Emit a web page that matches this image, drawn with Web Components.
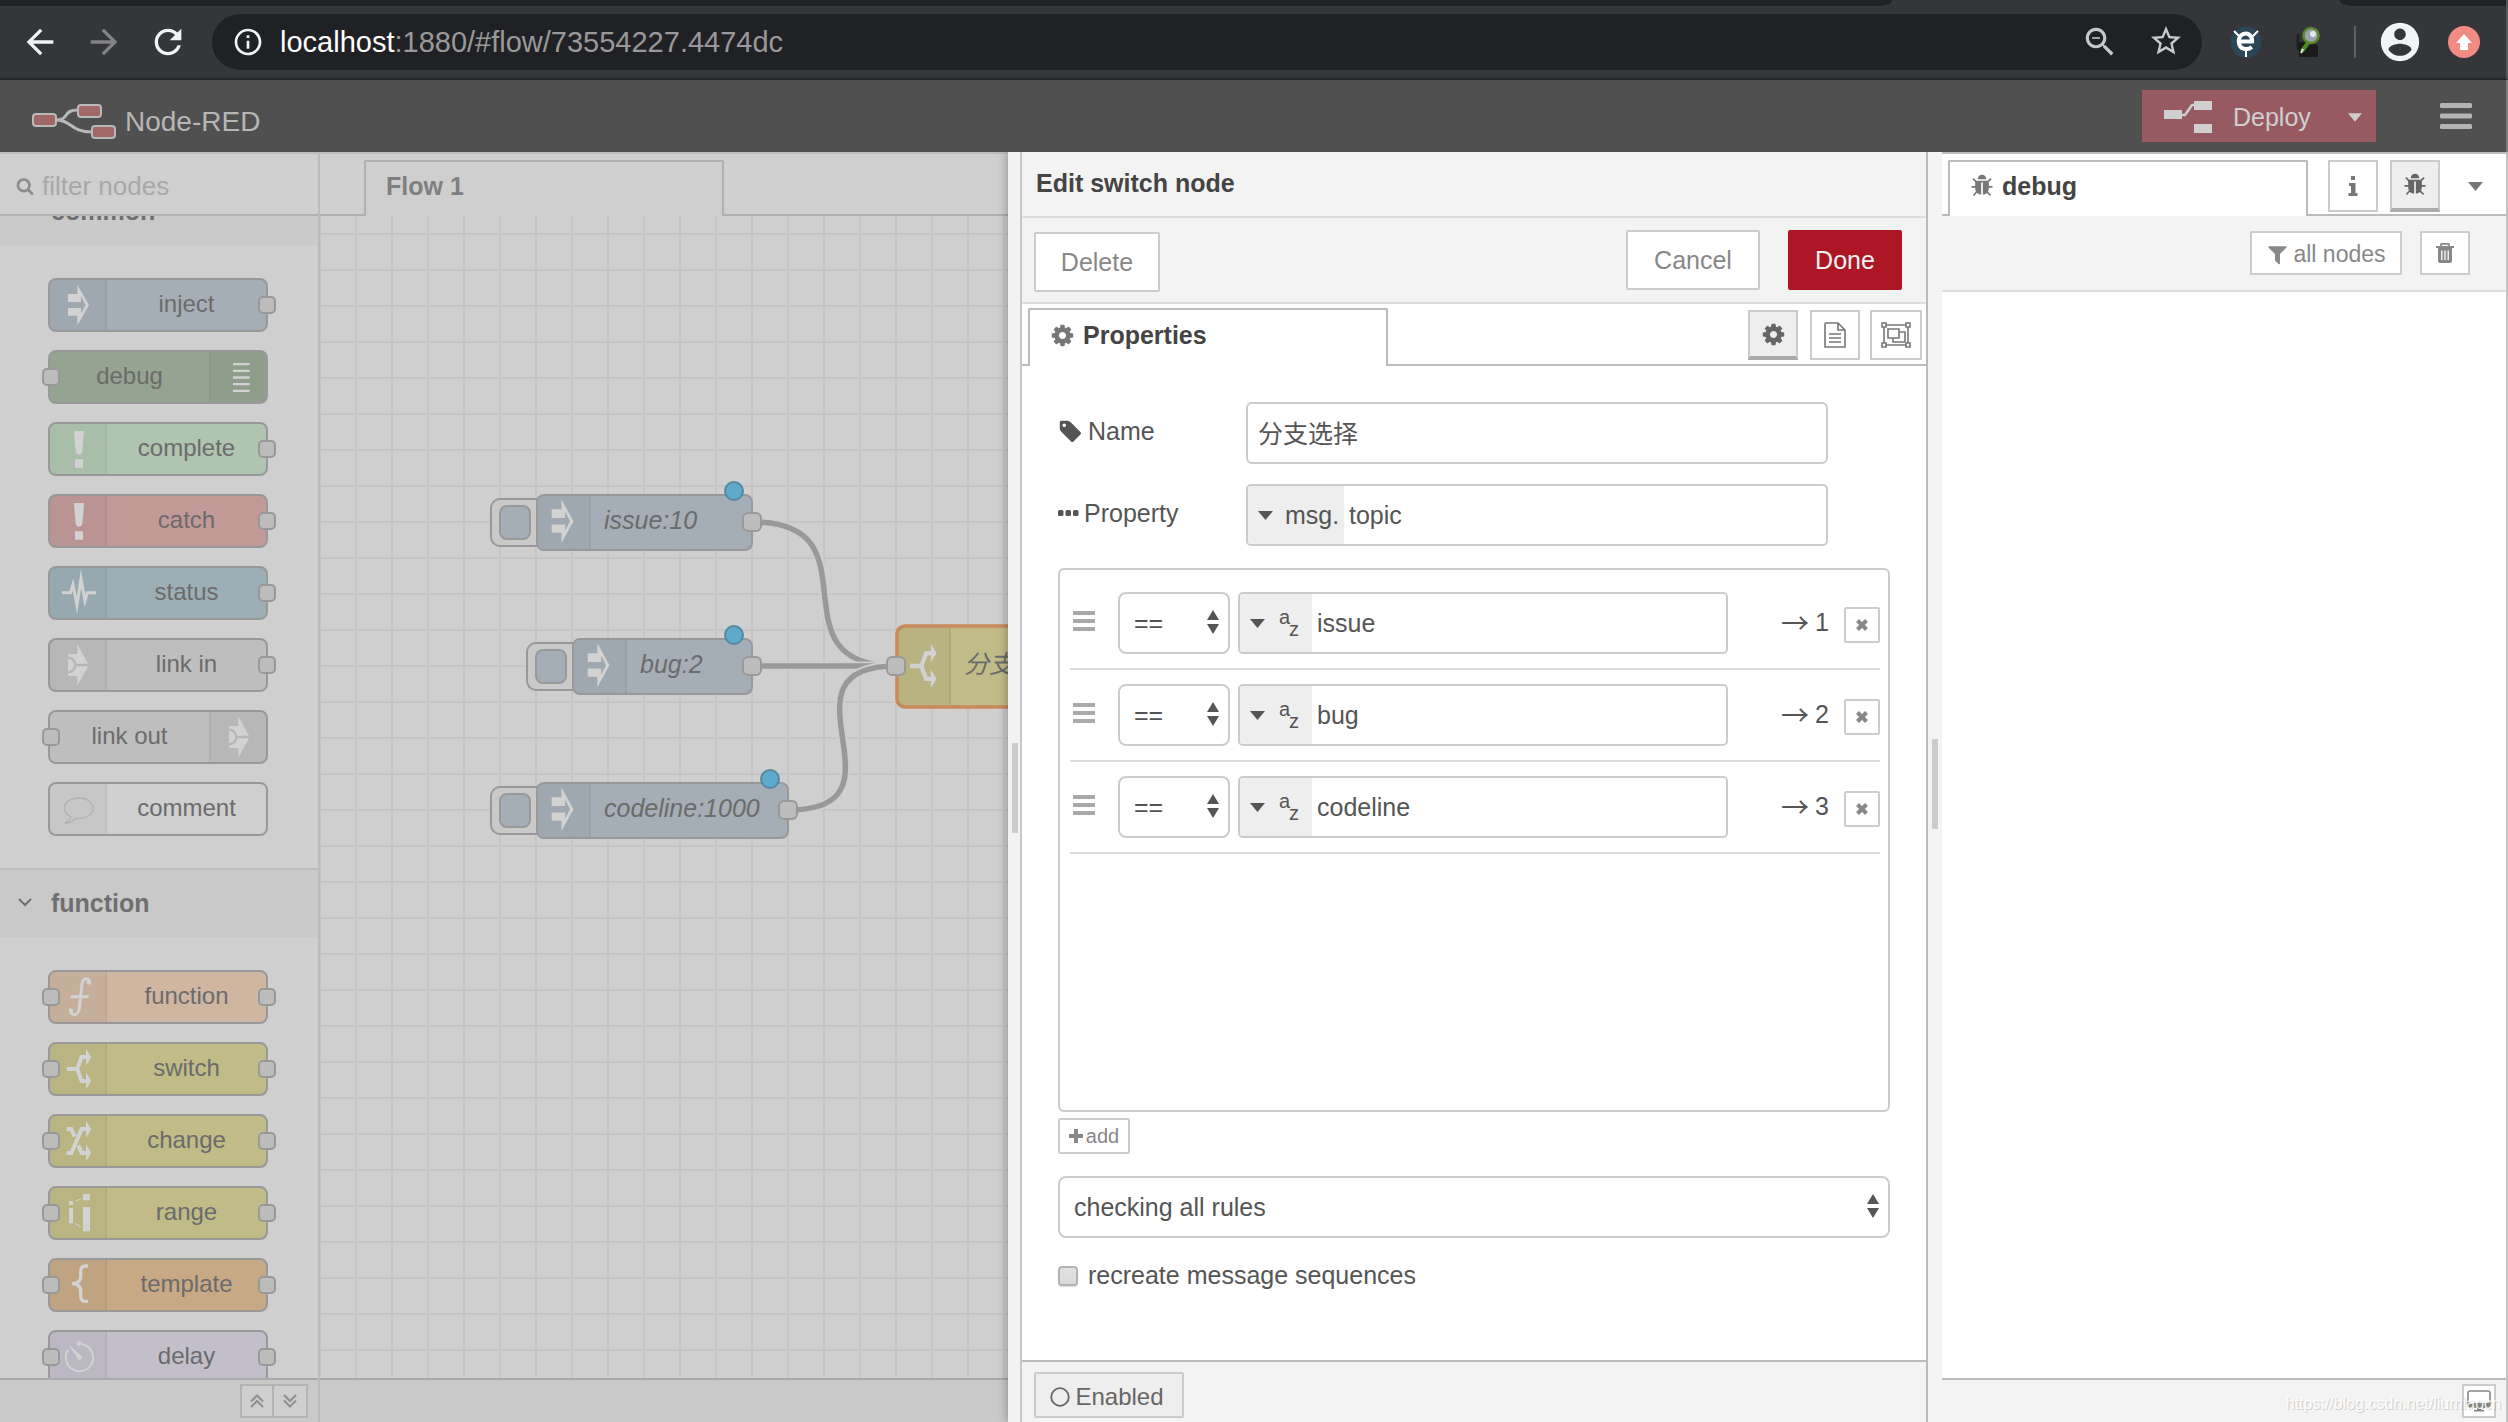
<!DOCTYPE html>
<html lang="en">
<head>
<meta charset="utf-8">
<title>Node-RED</title>
<style>
body{margin:0;font-family:"Liberation Sans","Noto Sans CJK SC",sans-serif;font-size:25px;line-height:30px;color:#555;background:#fff;overflow:hidden}
</style>
</head>
<body>
<red-app></red-app>
<script>
const BASE = `<style>
*{box-sizing:border-box}
svg{display:block;flex:none}
button,input,select{font:inherit;color:inherit;margin:0}
button{display:flex;align-items:center;justify-content:center;padding:0;background:#fff;border:2px solid #ccc;color:#888;border-radius:2px}
input:not([type=checkbox]){border:0;background:none;outline:0;min-width:0}
a{color:inherit;text-decoration:none}
</style>`;
function define(name, render) {
  customElements.define(name, class extends HTMLElement {
    connectedCallback() {
      if (this.shadowRoot) return;
      const t = document.createElement('template');
      t.innerHTML = BASE + (typeof render === 'function' ? render(this) : render);
      this.attachShadow({mode: 'open'}).append(t.content.cloneNode(true));
    }
  });
}
const attr = (el, n, d = '') => el.getAttribute(n) ?? d;
const svg = (w, h, vb, body) => `<svg width="${w}" height="${h}" viewBox="${vb}" fill="currentColor" aria-hidden="true">${body}</svg>`;

/* icons on the 1792 grid */
const FA = {
  cog: 'M1152 896q0-106-75-181t-181-75-181 75-75 181 75 181 181 75 181-75 75-181zm512-109v222q0 12-8 23t-20 13l-185 28q-19 54-39 91 35 50 107 138 10 12 10 25t-9 23q-27 37-99 108t-94 71q-12 0-26-9l-138-108q-44 23-91 38-16 136-29 186-7 28-36 28h-222q-14 0-24.5-8.5t-11.5-21.5l-28-184q-49-16-90-37l-141 107q-10 9-25 9-14 0-25-11-126-114-165-168-7-10-7-23 0-12 8-23 15-21 51-66.5t54-70.5q-27-50-41-99l-183-27q-13-2-21-12.5t-8-23.5v-222q0-12 8-23t19-13l186-28q14-46 39-92-40-57-107-138-10-12-10-24 0-10 9-23 26-36 98.5-107.5t94.5-71.5q13 0 26 10l138 107q44-23 91-38 16-136 29-186 7-28 36-28h222q14 0 24.5 8.5t11.5 21.5l28 184q49 16 90 37l142-107q9-9 24-9 13 0 25 10 129 119 165 170 7 8 7 22 0 12-8 23-15 21-51 66.5t-54 70.5q26 50 41 98l183 28q13 2 21 12.5t8 23.5z',
  tag: 'M576 448q0-53-37.5-90.5t-90.5-37.5-90.5 37.5-37.5 90.5 37.5 90.5 90.5 37.5 90.5-37.5 37.5-90.5zm1067 576q0 53-37 90l-491 492q-39 37-91 37-53 0-90-37l-715-716q-38-37-64.5-101t-26.5-117v-416q0-52 38-90t90-38h416q53 0 117 26.5t102 64.5l715 714q37 39 37 91z',
  bug: 'M1696 960q0 26-19 45t-45 19h-224q0 171-67 290l208 209q19 19 19 45t-19 45q-18 19-45 19t-45-19l-198-197q-5 5-15 13t-42 28.5-65 36.5-82 29-97 13v-896h-128v896q-51 0-101.5-13.5t-87-33-66-39-43.5-32.5l-15-14-183 207q-20 21-48 21-24 0-43-16-19-18-20.5-44.5t15.5-46.5l202-227q-58-114-58-274h-224q-26 0-45-19t-19-45 19-45 45-19h224v-294l-173-173q-19-19-19-45t19-45 45-19 45 19l173 173h844l173-173q19-19 45-19t45 19 19 45-19 45l-173 173v294h224q26 0 45 19t19 45zm-480-576h-640q0-133 93.5-226.5t226.5-93.5 226.5 93.5 93.5 226.5z',
  filter: 'M1595 295q17 41-14 70l-493 493v742q0 42-39 59-13 5-25 5-27 0-45-19l-256-256q-19-19-19-45v-486l-493-493q-31-29-14-70 17-39 59-39h1280q42 0 59 39z',
  search: 'M1216 832q0-185-131.5-316.5t-316.5-131.5-316.5 131.5-131.5 316.5 131.5 316.5 316.5 131.5 316.5-131.5 131.5-316.5zm512 832q0 52-38 90t-90 38q-54 0-90-38l-343-342q-179 124-399 124-143 0-273.5-55.5t-225-150-150-225-55.5-273.5 55.5-273.5 150-225 225-150 273.5-55.5 273.5 55.5 225 150 150 225 55.5 273.5q0 220-124 399l343 343q37 37 37 90z'
};
const fa = (n, s) => svg(s, s, '0 0 1792 1792', `<path d="${FA[n]}"/>`);
/* icons on the 24 grid */
const MD = {
  back: 'M20 11H7.83l5.59-5.59L12 4l-8 8 8 8 1.41-1.41L7.83 13H20v-2z',
  fwd: 'M4 11h12.17l-5.59-5.59L12 4l8 8-8 8-1.41-1.41L16.17 13H4z',
  reload: 'M17.65 6.35C16.2 4.9 14.21 4 12 4c-4.42 0-7.99 3.58-7.99 8s3.57 8 7.99 8c3.73 0 6.84-2.55 7.73-6h-2.08c-.82 2.33-3.04 4-5.65 4-3.31 0-6-2.69-6-6s2.69-6 6-6c1.66 0 3.14.69 4.22 1.78L13 11h7V4l-2.35 2.35z',
  info: 'M11 7h2v2h-2zm0 4h2v6h-2zm1-9C6.480 2 2 6.480 2 12s4.480 10 10 10 10-4.480 10-10S17.520 2 12 2zm0 18c-4.410 0-8-3.590-8-8s3.590-8 8-8 8 3.590 8 8-3.590 8-8 8z',
  zoom: 'M15.5 14h-.79l-.28-.27C15.41 12.59 16 11.11 16 9.5 16 5.91 13.09 3 9.5 3S3 5.91 3 9.5 5.91 16 9.5 16c1.61 0 3.09-.59 4.23-1.57l.27.28v.79l5 4.99L20.49 19l-4.99-5zm-6 0C7.01 14 5 11.99 5 9.5S7.01 5 9.5 5 14 7.01 14 9.5 11.99 14 9.5 14zM7 9h5v1H7z',
  star: 'M22 9.24l-7.19-.62L12 2 9.19 8.63 2 9.24l5.46 4.73L5.82 21 12 17.27 18.18 21l-1.63-7.03L22 9.24zM12 15.4l-3.76 2.27 1-4.28-3.32-2.88 4.38-.38L12 6.1l1.71 4.04 4.38.38-3.32 2.88 1 4.28L12 15.4z',
  user: 'M12 2C6.48 2 2 6.48 2 12s4.48 10 10 10 10-4.48 10-10S17.52 2 12 2zm0 3c1.66 0 3 1.34 3 3s-1.34 3-3 3-3-1.34-3-3 1.34-3 3-3zm0 14.2c-2.5 0-4.71-1.28-6-3.22.03-1.99 4-3.08 6-3.08 1.99 0 5.97 1.09 6 3.08-1.29 1.94-3.5 3.22-6 3.22z'
};
const md = (n, s) => svg(s, s, '0 0 24 24', `<path d="${MD[n]}"/>`);
const caret = (w = 15) => svg(w, 9, '0 0 15 9', '<path d="M0 0h15L7.500 9z"/>');

/* node glyphs, three units to the pixel */
const GLYPH = {
  inject: '<path d="M54 42H82V14L117 75 82 136V107H54V84H93V101L107 75 93 49V66H54z"/>',
  debug: '<path d="M66 33h50v7H66zM66 53h50v7H66zM66 73h50v7H66zM66 93h50v7H66zM66 113h50v7H66z"/>',
  bang: '<path d="M72 24q0-3 3-3h24q3 0 3 3l-5 60q-2 8-10 8t-10-8zM75 106h24v25H75z"/>',
  status: '<path d="M36 74H61L69 49 81 112 93 32 105 98 112 74H138" fill="none" stroke="currentColor" stroke-width="9" stroke-miterlimit="12"/>',
  link: '<path d="M54 42H82V13L116 75 82 137V108H54z"/><path d="M54 53a22 22 0 0 1 0 44M76 75h42" fill="none" stroke="#b7b7b7" stroke-width="7"/>',
  comment: '<path d="M64 99C50 93 43 84 43 73 43 55 62 42 86 42s43 13 43 31-19 31-43 31q-5 0-8-1Q66 115 46 119 45 116 50 113 60 106 64 99z" fill="none" stroke="#b2b2b2" stroke-width="4"/>',
  fn: '<path d="M119 31C116 17 99 15 96 36L88 108C86 132 64 134 61 116M62 74h54" fill="none" stroke="currentColor" stroke-width="9"/><circle cx="117" cy="31" r="7"/><circle cx="63" cy="116" r="7"/>',
  sw: '<path d="M50 75H82M80 79L95 39H109M80 71L95 111H109" fill="none" stroke="currentColor" stroke-width="12"/><path d="M108 14L124 39 108 65zM108 85L124 111 108 136z"/>',
  change: '<path d="M50 39H64L74 62M50 111H64L95 39H109M85 88L95 111H109" fill="none" stroke="currentColor" stroke-width="12"/><path d="M108 14L124 39 108 65zM108 85L124 111 108 136z"/>',
  range: '<path d="M57 39h12v12H57zM57 60h12v46H57zM99 18h21v19H99zM99 57h21v73H99z"/><path d="M78 39l14-6M75 106l17 10" stroke="currentColor" stroke-width="3"/>',
  brace: '<path d="M114 18H108C95 18 92 24 92 35V50C92 64 84 70 66 71 84 72 92 78 92 92V107C92 118 95 124 108 124H114" fill="none" stroke="currentColor" stroke-width="10"/>',
  delay: '<path d="M94 36A41 41 0 1 1 55 53" fill="none" stroke="currentColor" stroke-width="6"/><path d="M54 37L95 72 85 82z"/><circle cx="89" cy="77" r="7"/><circle cx="87" cy="34" r="7"/>'
};
const glyph = n => svg(56, 50, '0 0 168 150', GLYPH[n]);

define('browser-bar', `<style>
:host{display:block;position:relative;background:#35363a;border-bottom:2px solid #272929;border-right:2px solid #55575a;height:80px;color:#f1f3f4}
.strip{position:absolute;top:0;height:6px;background:#202124}
.l{left:0;right:614px;border-bottom-right-radius:12px 6px}.r{right:0;width:166px;border-bottom-left-radius:12px 6px}
.bar{display:flex;align-items:center;padding:14px 26px 8px 20px}
.nav{display:flex;gap:24px}
button{background:none;border:0;color:inherit}
.omni{flex:1;height:56px;border-radius:28px;background:#202124;margin:0 28px 0 24px;padding:0 18px 0 20px;display:flex;align-items:center;font-size:29px;color:#999}
.omni>svg{color:#f1f3f4}
.omni b{font-weight:400;color:#fff}.url{flex:1;padding-left:16px}
.tools{display:flex;gap:29px;color:#c6c8ca}
.ext{display:flex;align-items:center;gap:28px}
.acct{display:flex;align-items:center;gap:25px;margin-left:21px}
i{width:2px;height:32px;background:#606165}
</style>
<div class="strip l"></div><div class="strip r"></div>
<div class="bar"><div class="nav"><button aria-label="Back">${md('back',40)}</button><button aria-label="Forward" style="color:#828386">${md('fwd',40)}</button><button aria-label="Reload">${md('reload',40)}</button></div>
<div class="omni">${md('info',32)}<div class="url"><b>localhost</b>:1880/#flow/73554227.4474dc</div><div class="tools">${md('zoom',38)}${md('star',36)}</div></div>
<div class="ext">${svg(32,32,'0 0 32 32','<circle cx="16" cy="16" r="15.500" fill="#2b4757"/><g fill="none" stroke="#fff"><path d="M4 5l6 6M28 5l-6 6M16 24v7" stroke-width="2"/><path d="M9 15.500H22.500M22 17C23.500 4 8 5 8.800 16c.5 8 9 8.500 13 5" stroke-width="4"/></g>')}
${svg(36,32,'0 0 36 32','<path d="M8 8v14l2 3" stroke="#222" stroke-width="3" fill="none"/><path d="M9 16h15l4 4v11H9z" fill="#1b1b1b"/><path d="M18 17l-6 8" stroke="#4b8a22" stroke-width="4"/><path d="M13 23l-2 4" stroke="#e8f0d8" stroke-width="2"/><circle cx="21" cy="9.500" r="7.500" fill="#9ba3b0" stroke="#5a8a2c" stroke-width="2.500"/><circle cx="23" cy="8" r="3" fill="#e3e6ea"/>')}<i></i></div>
<div class="acct">${md('user',46)}${svg(32,32,'0 0 32 32','<circle cx="16" cy="16" r="16" fill="#f28b82"/><path d="M16 8l8 9h-4v7h-8v-7H8z" fill="#fff"/>')}</div></div>`);

define('red-header', `<style>
:host{display:flex;align-items:center;height:72px;padding:0 34px 0 32px;background:#505050;border-right:2px solid #787878;color:#b6b6b6}
a{display:flex;align-items:center;gap:7px;font-size:28px;line-height:34px;padding-top:10px;margin-right:auto}
a span{padding-top:2px}
.deploy{width:234px;height:52px;background:#965a60;border:0;border-radius:0;color:#cfcfcf;justify-content:flex-start;padding:2px 14px 0 22px;gap:21px}
.deploy .c{margin-left:auto}
.menu{margin-left:64px;width:32px;height:52px;border:0;background:none}
</style>
<a href="#">${svg(86,36,'0 0 86 36','<g fill="none" stroke="#b9b9b9"><path d="M24 17C38 17 30 7 46 7M24 17C40 17 38 29 60 29" stroke-width="3"/><g fill="#a26767" stroke-width="2"><rect x="1" y="11" width="23" height="12" rx="3"/><rect x="46" y="2" width="23" height="12" rx="3"/><rect x="60" y="23" width="23" height="12" rx="3"/></g></g>')}<span>Node-RED</span></a>
<button class="deploy">${svg(48,32,'0 0 48 32','<path d="M0 9h18v9H0zM30 0h18v9H30zM30 23h18v9H30z"/><path d="M17 14h4L28 4h4" fill="none" stroke="currentColor" stroke-width="2.500"/>')}<span>Deploy</span><span class="c">${caret(14)}</span></button>
<button class="menu" aria-label="Menu">${svg(32,26,'0 0 32 26','<g fill="#b4b4b4"><rect width="32" height="5" rx="1.500"/><rect y="10.500" width="32" height="5" rx="1.500"/><rect y="21" width="32" height="5" rx="1.500"/></g>')}</button>`);

define('palette-node', el => `<style>
:host{display:block;position:relative;width:220px;height:54px;font-size:24px;color:#6b6b6b}
.n{display:flex;height:54px;border:2px solid #999;border-radius:8px;background:${attr(el,'color')};overflow:hidden;flex-direction:${el.hasAttribute('right')?'row-reverse':'row'}}
.z{width:57px;background:rgba(0,0,0,.035);color:#d2d2d2;border:0 solid rgba(0,0,0,.04);border-${el.hasAttribute('right')?'left':'right'}-width:2px}
.t{flex:1;text-align:center;line-height:48px}
.p{position:absolute;top:18px;width:18px;height:18px;border:2px solid #999;border-radius:5px;background:#bcbcbc}
.in{left:-6px}.out{right:-8px}
</style><div class="n"><div class="z">${glyph(attr(el,'icon'))}</div><div class="t"><slot></slot></div></div>${attr(el,'ports').includes('i')?'<div class="p in"></div>':''}${attr(el,'ports').includes('o')?'<div class="p out"></div>':''}`);

define('palette-category', el => `<style>
:host{display:block}
h2{margin:0;height:70px;border:solid #bbb;border-width:2px 0 0;border-bottom:1px solid #cbcbcb;background:#c9c9c9;color:#6f6f6f;font-size:25px;line-height:30px;display:flex;align-items:center;padding:0 0 2px 18px;gap:19px}
div{display:flex;flex-direction:column;gap:18px;padding:32px 0 32px 48px}
</style><h2>${svg(14,9,'0 0 14 9','<path d="M1 1l6 6 6-6" fill="none" stroke="currentColor" stroke-width="2"/>')}<span>${attr(el,'label')}</span></h2><div><slot></slot></div>`);

define('red-palette', `<style>
:host{display:flex;flex-direction:column;width:320px;flex:none;background:#cfcfcf;border-right:2px solid #bbb;border-top:2px solid #bbb;min-height:0}
.s{display:flex;align-items:center;height:62px;border-bottom:2px solid #b2b2b2;padding:4px 0 0 16px;gap:8px;color:#8b8b8b;flex:none;font-size:26px}
.s input{width:240px;padding:0}.s input::placeholder{color:#a8a8a8;opacity:1}
.list{flex:1;min-height:0;overflow:hidden}.in{margin-top:-40px}
.f{height:44px;flex:none;background:#c9c9c9;border-top:2px solid #aaa;display:flex;justify-content:flex-end;padding:4px 10px 4px 0}
.f button{width:34px;height:34px;border-color:#b4b4b4;background:#cfcfcf;color:#8f8f8f;border-radius:0}.f button+button{border-left-width:0}
</style>
<label class="s">${fa('search',18)}<input type="search" placeholder="filter nodes" aria-label="filter nodes"></label>
<div class="list"><div class="in"><palette-category label="common">
<palette-node color="#a5aeb7" icon="inject" ports="o">inject</palette-node>
<palette-node color="#95a490" icon="debug" ports="i" right>debug</palette-node>
<palette-node color="#b0c5b0" icon="bang" ports="o">complete</palette-node>
<palette-node color="#c19a98" icon="bang" ports="o">catch</palette-node>
<palette-node color="#9cafb7" icon="status" ports="o">status</palette-node>
<palette-node color="#bebebe" icon="link" ports="o">link in</palette-node>
<palette-node color="#bebebe" icon="link" ports="i" right>link out</palette-node>
<palette-node color="#cfcfcf" icon="comment">comment</palette-node>
</palette-category><palette-category label="function">
<palette-node color="#ceb6a0" icon="fn" ports="io">function</palette-node>
<palette-node color="#c1bb88" icon="sw" ports="io">switch</palette-node>
<palette-node color="#c1bb88" icon="change" ports="io">change</palette-node>
<palette-node color="#c1bb88" icon="range" ports="io">range</palette-node>
<palette-node color="#c7a985" icon="brace" ports="io">template</palette-node>
<palette-node color="#c2bfcb" icon="delay" ports="io">delay</palette-node>
</palette-category></div></div>
<div class="f"><button aria-label="Collapse all">${svg(14,14,'0 0 14 14','<path d="M1 7.500l6-6 6 6M1 13l6-6 6 6" fill="none" stroke="currentColor" stroke-width="2"/>')}</button><button aria-label="Expand all">${svg(14,14,'0 0 14 14','<path d="M1 1l6 6 6-6M1 6.500l6 6 6-6" fill="none" stroke="currentColor" stroke-width="2"/>')}</button></div>`);

/* canvas drawing, coordinates relative to the canvas corner */
const injectNode = (x, y, w, text) => `<g transform="translate(${x} ${y})" stroke="#999" stroke-width="2">
<rect x="-46" y="4" width="60" height="47" rx="9" fill="#c9c9c9"/><rect x="-37" y="11" width="30" height="33" rx="7" fill="#a5aeb7"/>
<rect width="${w}" height="55" rx="7" fill="#a5aeb7"/><path d="M1 8a7 7 0 0 1 7-7H53V54H8a7 7 0 0 1-7-7z" fill="#000" fill-opacity=".035" stroke="none"/><path d="M53 1v53" stroke="#000" stroke-opacity=".06"/>
<g stroke="none" fill="#d2d2d2" transform="translate(-4 -1) scale(.346 .363)">${GLYPH.inject}</g>
<text x="67" y="34" stroke="none">${text}</text>
<rect x="${w-9}" y="18" width="18" height="18" rx="5" fill="#bcbcbc"/><circle cx="${w-18}" cy="-4" r="9" fill="#5eaacc" stroke="#56899f"/></g>`;
const wire = d => `<path d="${d}" stroke="#cfcfcf" stroke-width="9"/><path d="${d}" stroke="#999" stroke-width="5.500"/>`;
define('flow-canvas', `<style>:host{display:block;flex:1;min-height:0;overflow:hidden;background:#cfcfcf}
text{font:italic 25px "Liberation Sans","Noto Sans CJK SC",sans-serif;fill:#6b6b6b}</style>
<svg width="100%" height="100%"><defs><pattern id="g" width="36" height="36" y="-18" patternUnits="userSpaceOnUse"><path d="M0 0V36M36 0V36M0 0H36M0 36H36" stroke="#c5c5c5" stroke-width="2" fill="none"/></pattern></defs>
<rect width="100%" height="100%" fill="url(#g)"/>
<g fill="none">${wire('M433 306C561 306 448 450 576 450')}${wire('M433 450H576')}${wire('M469 594C597 594 448 450 576 450')}</g>
${injectNode(217,279,215,'issue:10')}${injectNode(253,423,179,'bug:2')}${injectNode(217,567,251,'codeline:1000')}
<g transform="translate(577 410)"><rect width="180" height="81" rx="8" fill="#c1bb88" stroke="#ca8a5b" stroke-width="3.500"/><path d="M2 2H53V79H2z" fill="#000" fill-opacity=".04"/><path d="M53 2V79" stroke="#000" stroke-opacity=".08" stroke-width="2"/>
<g color="#d2d2d2" fill="#d2d2d2" transform="translate(-5 13) scale(.36)">${GLYPH.sw}</g><text x="67" y="47">分支选择</text>
<rect x="-10" y="31" width="18" height="18" rx="5" fill="#bcbcbc" stroke="#999" stroke-width="2"/></g></svg>`);

define('tab-strip', `<style>:host{display:flex;position:relative;flex:none}
:host::after{content:"";position:absolute;left:0;right:0;bottom:0;height:2px;background:var(--line,#bbb)}
div{position:relative;z-index:1;width:360px;border:2px solid var(--line,#bbb);border-bottom:0;border-radius:2px 2px 0 0;background:var(--bg,#fff);display:flex;align-items:center;gap:8px;padding:0 20px 6px;font-weight:700;color:var(--ink,#444)}
</style><div role="tab"><slot></slot></div><slot name="end"></slot>`);

define('red-workspace', `<style>
:host{display:flex;flex-direction:column;flex:1;min-width:0;border-top:2px solid #bbb;background:#cfcfcf}
tab-strip{height:62px;padding:6px 0 0 44px;--line:#b0b0b0;--bg:#cfcfcf;--ink:#808080}
footer{height:44px;flex:none;background:#c9c9c9;border-top:2px solid #aaa}
</style><tab-strip>Flow 1</tab-strip><flow-canvas></flow-canvas><footer></footer>`);

define('select-box', el => `<style>
:host{display:grid;height:62px}
select{grid-area:1/1;appearance:none;background:#fff;border:2px solid #ccc;border-radius:8px;padding:0 40px 0 14px;width:100%;height:100%}
span{grid-area:1/1;align-self:center;justify-self:end;margin-right:11px;margin-bottom:2px;pointer-events:none}
</style><select aria-label="${attr(el,'label')}"><option>${attr(el,'value')}</option></select><span>${svg(12,24,'0 0 12 24','<path d="M0 10L6 0l6 10zM0 14h12L6 24z"/>')}</span>`);

define('typed-input', el => `<style>
:host{display:flex;height:62px;border:2px solid #ccc;border-radius:5px;overflow:hidden;background:#fff}
button{background:#eee;border:0;border-radius:0;color:#555;padding:0 0 0 10px;gap:12px;justify-content:flex-start;flex:none;width:${attr(el,'type')==='az'?72:96}px}
.az{display:flex;height:30px;line-height:18px;font-size:20px;padding-left:2px}.az b{font-weight:400;width:10px}.az b+b{align-self:flex-end}
input{flex:1;padding:0 5px}
</style><button aria-label="Type">${caret()}${attr(el,'type')==='az'?'<span class="az"><b>a</b><b>z</b></span>':`<span>${attr(el,'type')}</span>`}</button><input aria-label="${attr(el,'label')}" value="${attr(el,'value')}">`);

define('rule-row', el => `<style>
:host{display:flex;align-items:center;height:92px;border-bottom:2px solid #ddd;padding-left:3px}
.h{color:#aaa;margin:0 23px 4px 0}
select-box{width:112px;margin-right:8px}
typed-input{flex:1;min-width:0}
.o{width:101px;display:flex;justify-content:flex-end;align-items:center;gap:6px;padding-bottom:2px}
.o b{font:28px/30px "Noto Sans CJK SC",sans-serif}
button{width:36px;height:36px;margin:4px 0 0 15px}
</style><span class="h">${svg(22,20,'0 0 22 20','<path d="M0 0h22v4H0zM0 8h22v4H0zM0 16h22v4H0z"/>')}</span>
<select-box value="==" label="Operator"></select-box><typed-input type="az" value="${attr(el,'value')}" label="Value"></typed-input>
<span class="o"><b>→</b><span>${attr(el,'n')}</span></span><button aria-label="Remove rule">${svg(12,12,'0 0 12 12','<path d="M1.500 1.500l9 9M10.500 1.500l-9 9" stroke="currentColor" stroke-width="4"/>')}</button>`);

define('edit-tray', `<style>
:host{display:flex;flex:none;width:920px;border-right:2px solid #bbb;background:#fff;box-shadow:0 0 10px rgba(0,0,0,.35);clip-path:inset(0 0 0 -20px);position:relative;z-index:2}
.grip{width:14px;background:#f2f2f2;border-right:2px solid #c8c8c8;display:flex;align-items:center;padding:2px 0 0 4px;flex:none}
.grip i{width:6px;height:90px;background:#ccc}
.col{flex:1;display:flex;flex-direction:column;min-width:0}
header{height:66px;background:#f3f3f3;border-bottom:2px solid #ddd;padding:0 14px 2px;display:flex;align-items:center;font-weight:700;color:#444}
.bar{height:86px;background:#f3f3f3;border-bottom:2px solid #ddd;display:flex;align-items:flex-start;padding:12px 24px 0 12px}
.bar button{height:60px}.bar .del{width:126px;margin:2px auto 0 0}.can{width:134px;margin-right:28px}.done{width:114px;background:#ad1625;border-color:#ad1625;color:#f2f2f2}
tab-strip{height:62px;padding:4px 4px 0 6px}
tab-strip svg{color:#777}
.ic{display:flex;margin-left:auto;padding-top:2px;position:relative}
.ic button{width:50px;height:50px;border-radius:0;margin-right:12px}.ic button+button{margin-right:10px}.ic button+button+button{width:52px;margin:0}
.ic .on{background:#eee;border-bottom:4px solid #aaa;color:#666}.ic .on svg{color:#666}
form{flex:1;display:flex;flex-direction:column;padding:36px 36px 70px;min-height:0}
.row{display:flex;align-items:center;margin-bottom:20px}.row+.row{margin-bottom:22px}
.row label{width:188px;display:flex;align-items:center;gap:5px;padding-bottom:4px}
.row>input,.row typed-input{width:70%}
.row>input{height:62px;border:2px solid #ccc;border-radius:6px;padding:0 10px 2px;background:#fff}
.list{flex:1;border:2px solid #ccc;border-radius:6px;padding:8px 8px 0 10px;min-height:0}
.add{width:72px;height:36px;font-size:20px;gap:3px;margin:6px 0 22px}
.chk{display:flex;align-items:center;gap:10px;margin-top:22px}
.chk input{appearance:none;width:20px;height:20px;border:2px solid #b3b3b3;border-radius:4px;background:linear-gradient(#e2e2e2,#dadada);margin:2px 0 0;box-shadow:0 1px 1px #ddd}
footer{height:62px;background:#f3f3f3;border-top:2px solid #bbb;padding:10px 12px;flex:none}
footer button{width:150px;height:46px;font-size:24px;gap:5px;color:#666;background:#eee;padding:4px 4px 0 0}
</style>
<div class="grip"><i></i></div><div class="col">
<header>Edit switch node</header>
<div class="bar"><button class="del">Delete</button><button class="can">Cancel</button><button class="done">Done</button></div>
<tab-strip>${fa('cog',25)}<span>Properties</span><div class="ic" slot="end"><button class="on" aria-label="Properties">${fa('cog',25)}</button><button aria-label="Description">${svg(22,26,'0 0 22 26','<path d="M2 1H14L21 8V25H1V2q0-1 1-1zM14 1V8H21M5 12h12M5 16h12M5 20h12" fill="none" stroke="currentColor" stroke-width="1.600"/>')}</button><button aria-label="Appearance">${svg(30,26,'0 0 30 26','<g fill="none" stroke="currentColor" stroke-width="1.600"><path d="M3 3H27V23H3z"/><path d="M7 7H18V16H7zM18 10H24V20H12V16"/><path d="M1 1h4v4H1zM25 1h4v4h-4zM1 21h4v4H1zM25 21h4v4h-4z" fill="#fff"/></g>')}</button></div></tab-strip>
<form><div class="row"><label for="name">${fa('tag',25)}Name</label><input id="name" value="分支选择"></div>
<div class="row"><label>${svg(21,6,'0 0 21 6','<rect width="5.500" height="6" rx="1.500"/><rect x="7.500" width="5.500" height="6" rx="1.500"/><rect x="15" width="5.500" height="6" rx="1.500"/>')}Property</label><typed-input type="msg." value="topic" label="Property"></typed-input></div>
<div class="list"><rule-row value="issue" n="1"></rule-row><rule-row value="bug" n="2"></rule-row><rule-row value="codeline" n="3"></rule-row></div>
<button type="button" class="add">${svg(14,14,'0 0 14 14','<path d="M5 0h4v5h5v4H9v5H5V9H0V5h5z"/>')}add</button>
<select-box value="checking all rules" label="Rule mode"></select-box>
<label class="chk"><input type="checkbox">recreate message sequences</label></form>
<footer><button>${svg(20,20,'0 0 20 20','<circle cx="10" cy="10" r="8.800" fill="none" stroke="currentColor" stroke-width="1.800"/>')}Enabled</button></footer></div>`);

define('red-sidebar', `<style>
:host{display:flex;flex:none;width:580px}
.grip{width:14px;background:#f3f3f3;display:flex;align-items:center;padding:0 0 6px 4px;flex:none}
.grip i{width:6px;height:90px;background:#ccc}
.col{flex:1;display:flex;flex-direction:column;border-top:2px solid #bbb;border-right:2px solid #c4c4c4;background:#fff;min-width:0}
tab-strip{height:62px;padding:6px 23px 0 6px}
tab-strip svg{color:#777}
.ic{display:flex;gap:12px;margin-left:auto;padding-bottom:4px}
.ic button{width:50px;height:52px;border-radius:0}
.ic .on{background:#eee;border-bottom:4px solid #aaa}.ic .on svg{color:#666}
.ic .dd{border:0;width:15px;margin-left:16px}
.bar{height:76px;flex:none;background:#f3f3f3;border-bottom:2px solid #ddd;display:flex;justify-content:flex-end;align-items:center;gap:18px;padding:0 36px 0 0}
.bar button{height:44px;border-radius:0;font-size:23px;gap:4px}.bar .all{width:152px;padding-top:2px}.tr{width:50px}
main{flex:1}
footer{height:44px;flex:none;background:#f3f3f3;border-top:2px solid #bbb;display:flex;justify-content:flex-end;padding:4px 10px;position:relative}
footer button{width:34px;height:34px;border-radius:0}
.wm{position:absolute;right:5px;top:14px;font-size:16px;line-height:20px;color:rgba(255,255,255,.9);text-shadow:1px 1px 1px rgba(0,0,0,.18)}
</style>
<div class="grip"><i></i></div><div class="col">
<tab-strip>${fa('bug',24)}<span>debug</span><div class="ic" slot="end"><button aria-label="Information">${svg(10,20,'0 0 10 20','<path d="M3 0h4v4H3zM1 7h6.500v10H9.500v3H.5v-3H3v-7H1z"/>')}</button><button class="on" aria-label="Debug">${fa('bug',24)}</button><button class="dd" aria-label="More">${caret()}</button></div></tab-strip>
<div class="bar"><button class="all">${fa('filter',23)}<span>all nodes</span></button><button class="tr" aria-label="Clear">${svg(18,20,'0 0 18 20','<path d="M5 3V1.500Q5 .8 6 .8h6q1 0 1 .7V3M0 4h18" fill="none" stroke="currentColor" stroke-width="1.800"/><path d="M2 5h14V18q0 2-2 2H4q-2 0-2-2z"/><path d="M5.800 7.500V17M9 7.500V17M12.200 7.500V17" stroke="#fff" stroke-width="1.300"/>')}</button></div>
<main></main><footer><button aria-label="Open debug window">${svg(24,22,'0 0 24 22','<rect x="1" y="1" width="22" height="16" rx="2" fill="none" stroke="currentColor" stroke-width="1.600"/><path d="M1 13h22v4H1zM10 17h4v3h3v1.500H7V20h3z"/>')}</button><div class="wm">https://blog.csdn.net/liumiaocn</div></footer></div>`);

define('red-app', `<style>
:host{display:flex;flex-direction:column;height:100vh}
browser-bar,red-header{flex:none}
.m{flex:1;display:flex;min-height:0}
</style><browser-bar></browser-bar><red-header></red-header><div class="m"><red-palette></red-palette><red-workspace></red-workspace><edit-tray></edit-tray><red-sidebar></red-sidebar></div>`);
</script>
</body>
</html>
